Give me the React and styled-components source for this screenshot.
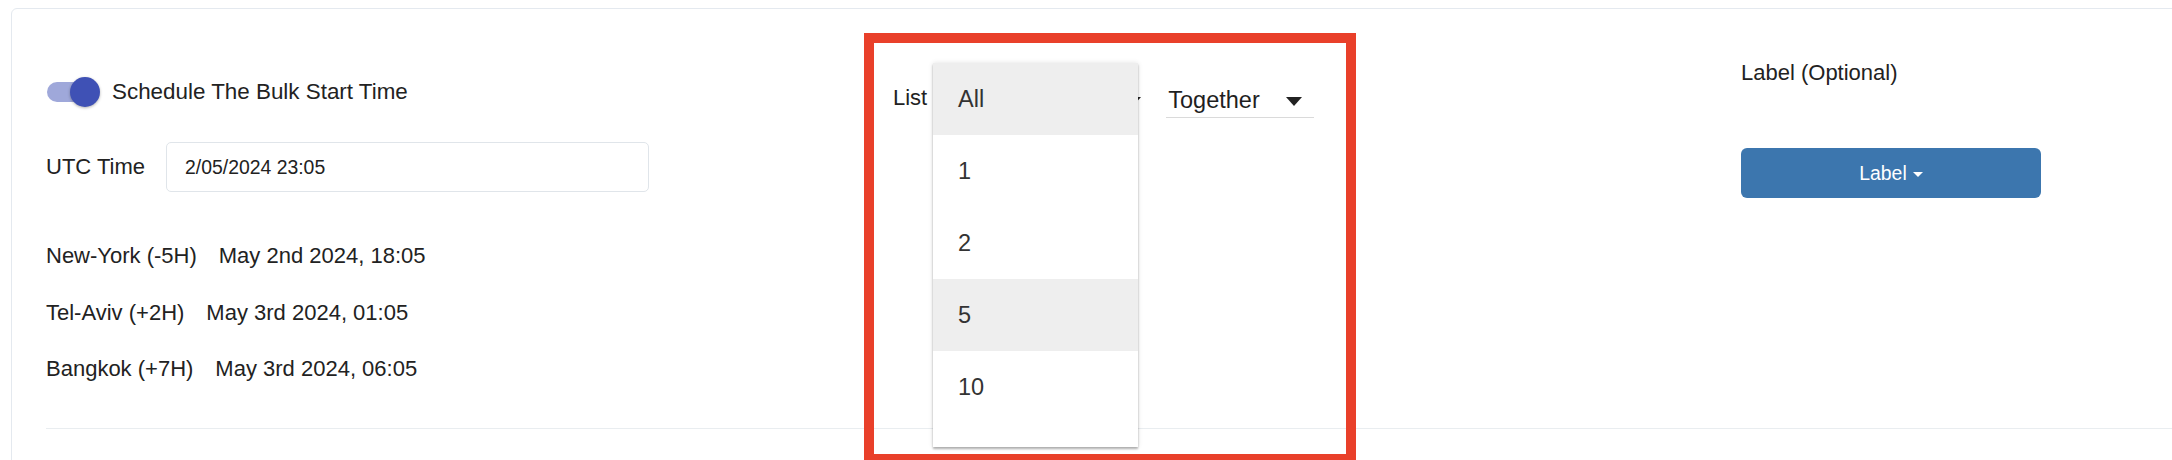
import React from 'react';
import styled, { createGlobalStyle } from 'styled-components';

const textColor = '#222';
const accent = '#3f51b5';

const GlobalStyle = createGlobalStyle`
    html, body {
        margin: 0;
        padding: 0;
        background: #fff;
        overflow: hidden;
    }
    body {
        font-family: "Liberation Sans", Arial, Helvetica, sans-serif;
        color: ${textColor};
    }
`;

const Page = styled.div`
    width: 2172px;
    height: 460px;
    overflow: hidden;
`;

const Card = styled.div`
    margin: 8px 0 0 11px;
    width: 2600px;
    background: #fff;
    border: 1px solid #e4e9ef;
    border-radius: 6px;
    padding: 0 34px 60px 34px;
`;

const Grid = styled.div`
    display: grid;
    grid-template-columns: 847px 848px 849px;
    align-items: start;
`;

const Column = styled.div`
    position: relative;
    display: flex;
    flex-direction: column;
    padding-top: ${p => p.$top}px;
`;

const Text = styled.span`
    font-size: ${p => p.$size || 22}px;
    line-height: 26px;
    white-space: nowrap;
`;

const ToggleRow = styled.div`
    display: flex;
    align-items: center;
    gap: 12px;
    height: 30px;
    padding-left: 1px;
`;

const Track = styled.div`
    display: flex;
    align-items: center;
    justify-content: flex-end;
    width: 47px;
    height: 20px;
    border-radius: 10px;
    background: #9fa8da;
    margin-right: 6px;
`;

const Thumb = styled.div`
    flex-shrink: 0;
    width: 30px;
    height: 30px;
    border-radius: 50%;
    background: ${accent};
    margin-right: -6px;
    box-shadow: 0 1px 3px rgba(0, 0, 0, 0.3);
`;

const FieldRow = styled.div`
    display: flex;
    align-items: center;
    gap: 21px;
    margin-top: 35px;
`;

const Input = styled.div`
    display: flex;
    align-items: center;
    box-sizing: border-box;
    width: 483px;
    height: 50px;
    padding-left: 18px;
    border: 1px solid #e0e5ea;
    border-radius: 5px;
    font-size: 19.4px;
`;

const ZoneList = styled.div`
    display: flex;
    flex-direction: column;
    gap: 30.5px;
    margin-top: 51px;
`;

const ZoneRow = styled.div`
    display: flex;
    gap: 22px;
`;

const Divider = styled.div`
    height: 1px;
    background: #e9edf0;
    margin-top: 46px;
`;

const SelectRow = styled.div`
    display: flex;
    align-items: flex-start;
`;

const ListLabel = styled(Text)`
    margin-top: -1.5px;
`;

const Select = styled.div`
    display: flex;
    justify-content: space-between;
    box-sizing: border-box;
    width: ${p => p.$width}px;
    min-height: 31px;
    margin-left: ${p => p.$gap}px;
    padding: 0 12px 3px 2px;
    border-bottom: 1px solid ${p => (p.$underline ? '#dadada' : 'transparent')};
    font-size: 23.5px;
    line-height: 28px;
    color: #1f1f1f;
`;

const Arrow = styled.span`
    align-self: center;
    margin-top: 3px;
    margin-left: auto;
    width: 0;
    height: 0;
    border-left: 8.5px solid transparent;
    border-right: 8.5px solid transparent;
    border-top: 9px solid #222;
`;

const Menu = styled.ul`
    position: absolute;
    left: 40px;
    top: 54px;
    width: 205px;
    height: 384px;
    margin: 0;
    padding: 0;
    list-style: none;
    background: #fff;
    box-shadow: 0 2px 2px rgba(0, 0, 0, 0.28), 0 0 5px rgba(0, 0, 0, 0.12);
    z-index: 2;
`;

const MenuItem = styled.li`
    display: flex;
    align-items: center;
    height: 72px;
    padding-left: 25px;
    font-size: 23.5px;
    color: #333;
    background: ${p => (p.$active ? '#eeeeee' : '#fff')};
`;

const Highlight = styled.div`
    position: absolute;
    left: -29px;
    top: 24px;
    box-sizing: border-box;
    width: 492px;
    height: 431px;
    border: 10px solid #e9402a;
    z-index: 3;
`;

const Button = styled.button`
    display: flex;
    align-items: center;
    justify-content: center;
    gap: 6px;
    width: 300px;
    height: 50px;
    margin-top: 62px;
    border: none;
    border-radius: 6px;
    background: #3c76ae;
    color: #fff;
    font-family: inherit;
    font-size: 19.4px;
    cursor: pointer;
`;

const Caret = styled.span`
    width: 0;
    height: 0;
    margin-top: 2px;
    border-left: 5px solid transparent;
    border-right: 5px solid transparent;
    border-top: 5px solid #fff;
`;

const zones = [
    { city: 'New-York (-5H)', time: 'May 2nd 2024, 18:05' },
    { city: 'Tel-Aviv (+2H)', time: 'May 3rd 2024, 01:05' },
    { city: 'Bangkok (+7H)', time: 'May 3rd 2024, 06:05' },
];

const sizes = ['All', '1', '2', '5', '10'];

export default function App() {
    return (
        <Page>
            <GlobalStyle />
            <Card>
                <Grid>
                    {/* Schedule settings */}
                    <Column $top={68}>
                        <ToggleRow>
                            <Track>
                                <Thumb />
                            </Track>
                            <Text $size={22.4}>Schedule The Bulk Start Time</Text>
                        </ToggleRow>
                        <FieldRow>
                            <Text>UTC Time</Text>
                            <Input>2/05/2024 23:05</Input>
                        </FieldRow>
                        <ZoneList>
                            {zones.map(z => (
                                <ZoneRow key={z.city}>
                                    <Text>{z.city}</Text>
                                    <Text>{z.time}</Text>
                                </ZoneRow>
                            ))}
                        </ZoneList>
                    </Column>

                    {/* List size + send mode, with the size menu open over its select */}
                    <Column $top={77}>
                        <SelectRow>
                            <ListLabel>List</ListLabel>
                            <Select $width={213} $gap={13}>
                                <Arrow />
                            </Select>
                            <Select $width={148} $gap={13} $underline>
                                <span>Together</span>
                                <Arrow />
                            </Select>
                        </SelectRow>
                        <Menu>
                            {sizes.map(s => (
                                <MenuItem key={s} $active={s === 'All' || s === '5'}>
                                    {s}
                                </MenuItem>
                            ))}
                        </Menu>
                        <Highlight />
                    </Column>

                    {/* Label */}
                    <Column $top={51}>
                        <Text>Label (Optional)</Text>
                        <Button>
                            Label
                            <Caret />
                        </Button>
                    </Column>
                </Grid>
                <Divider />
            </Card>
        </Page>
    );
}
